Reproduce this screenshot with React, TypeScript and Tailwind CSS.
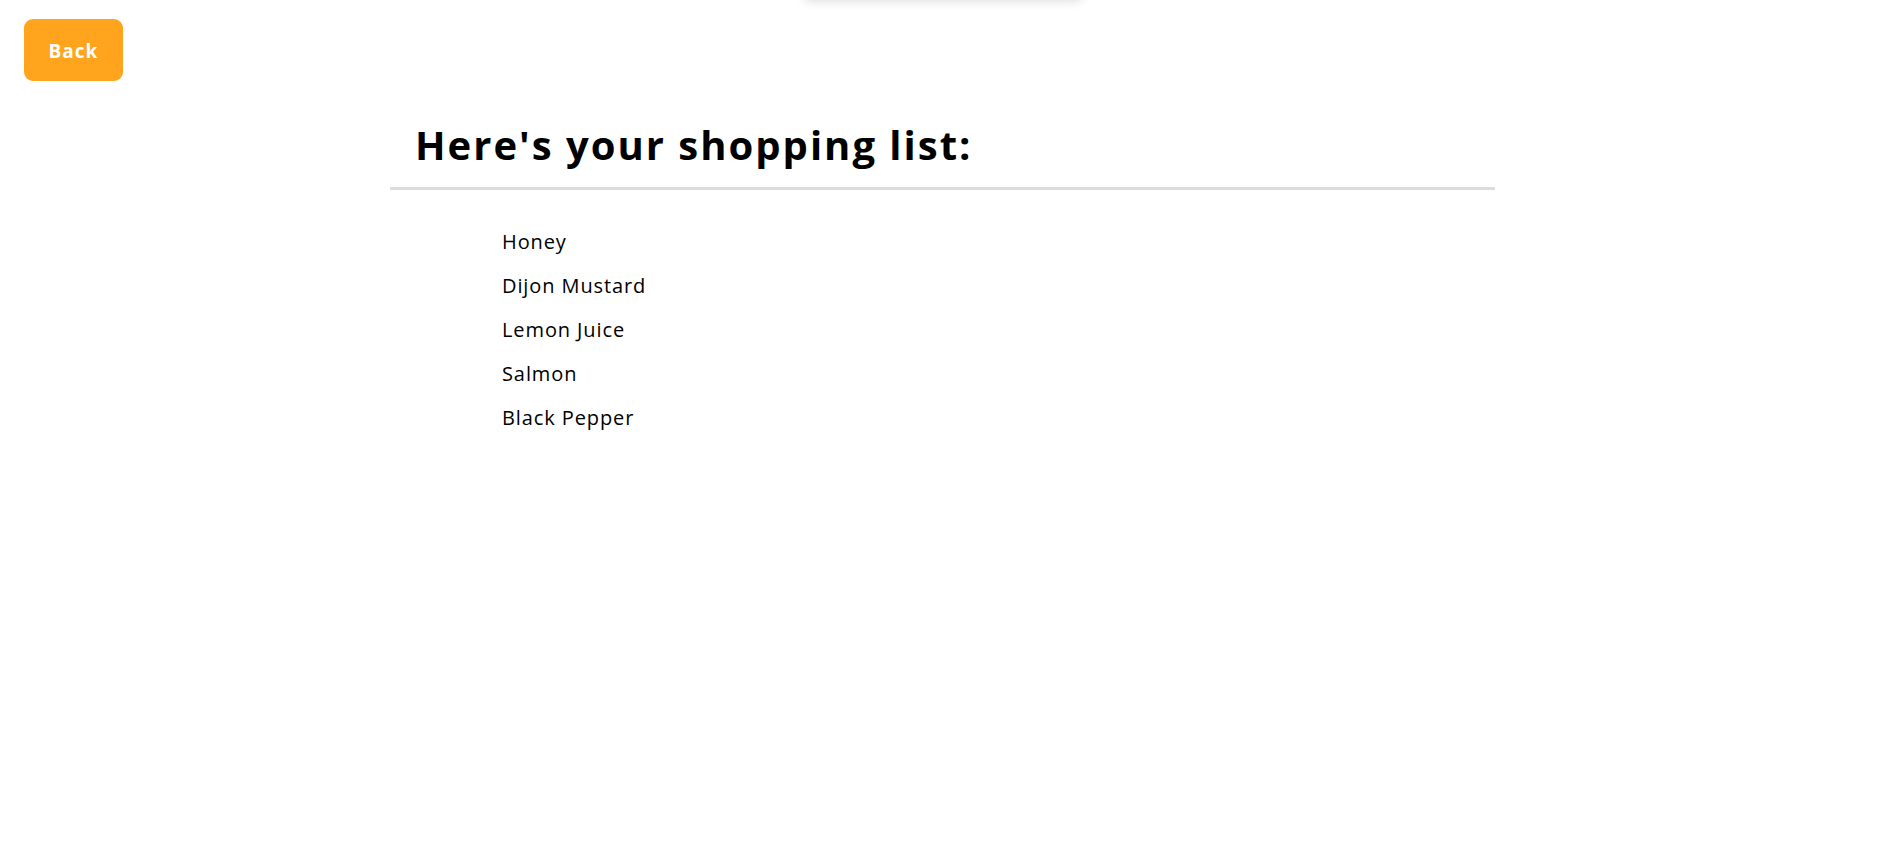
import React from "react";

const items = ["Honey", "Dijon Mustard", "Lemon Juice", "Salmon", "Black Pepper"];

export default function App() {
  return (
    <div className="relative min-h-[847px] w-full bg-white font-['Open_Sans',sans-serif] text-black">
      <div className="absolute left-1/2 top-[-24px] h-[24px] w-[280px] -translate-x-1/2 rounded-lg bg-white shadow-[0_2px_10px_rgba(0,0,0,0.12)]" />
      <div className="pl-[24px] pt-[19px]">
        <button className="flex h-[62px] w-[99px] items-center justify-center rounded-[9px] bg-[#ffa41c] pt-[2px] text-[19px] font-bold tracking-[1px] text-white">
          Back
        </button>
      </div>
      <div className="mx-auto mt-[36px] w-[1105px]">
        <h1 className="border-b-[3px] border-[#dcdcdc] pl-[25px] pr-[21px] pb-[14px] text-[40px] font-bold leading-[56px] tracking-[2px]">
          Here's your shopping list:
        </h1>
        <ul className="mt-[38px] flex flex-col gap-[16px] pl-[112px]">
          {items.map((it) => (
            <li key={it} className="text-[20px] leading-[28px] tracking-[0.9px]">
              {it}
            </li>
          ))}
        </ul>
      </div>
    </div>
  );
}
